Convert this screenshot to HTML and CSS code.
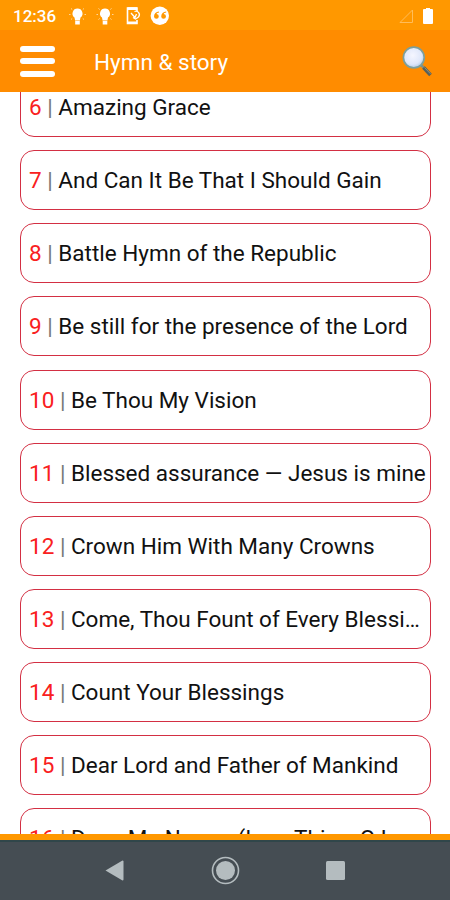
FILE: index.html
```html
<!DOCTYPE html>
<html lang="en">
<head>
    <meta charset="UTF-8">
    <meta name="viewport" content="width=device-width, initial-scale=1.0">
    <title>Hymn &amp; story</title>
    <link rel="stylesheet" href="styles.css">
</head>
<body>
    <div class="status-bar">
        <span class="time">12:36</span>
        <svg class="status-icons" width="108" height="30" viewBox="0 0 108 30" fill="#fff">
            <g id="bulb">
                <path d="M9.500 8.500a5 5 0 0 0-3 9l.7 3.500h4.600l.7-3.500A5 5 0 0 0 9.500 8.500zM7.200 20.500h4.600v4H7.200z"/>
                <path d="M1 14.500h1.500M16.500 14.500h1.500M3 8.500l1.200 1M16 8.500l-1.200 1M3 19.500l1.200-1M16 19.500l-1.200-1" stroke="#fff" stroke-opacity=".6"/>
            </g>
            <use href="#bulb" x="27.500"/>
            <g fill="none" stroke="#fff" stroke-width="1.600">
                <path d="M69 11V8h-9.500v15.500H69V20"/>
                <path d="M59.500 8.600H69M59.500 22.800H69" stroke-width="2.600"/>
                <path d="M66.500 11.500a3.500 3.500 0 0 1 4 5.500M63 13l4 4.500 1.500-3.500M70.500 17l-3 2-2.500-1.500" stroke-width="1.300"/>
            </g>
            <circle cx="91.800" cy="15.700" r="9.200"/>
            <path d="M91 11.500c-3 .2-5 2-5 5a2.400 2.400 0 1 0 2.600-2.500c.3-.8 1.100-1.300 2.400-1.400zM98.200 11.500c-3 .2-5 2-5 5a2.400 2.400 0 1 0 2.600-2.500c.3-.8 1.100-1.300 2.400-1.400z" fill="#ff9800"/>
        </svg>
        <svg class="status-right" width="40" height="30" viewBox="0 0 40 30">
            <path d="M0 22.500L12.500 10v12.500z" fill="none" stroke="#ffbd5a"/>
            <path d="M24 9h2V8h4v1h2q1 0 1 1v13q0 1-1 1h-8q-1 0-1-1V10q0-1 1-1z" fill="#fff"/>
        </svg>
    </div>

    <header>
        <button class="menu-btn" aria-label="Menu">
            <span></span>
            <span></span>
            <span></span>
        </button>
        <h1>Hymn &amp; story</h1>
        <svg class="search-icon" width="32" height="32" viewBox="0 0 32 32">
            <defs>
                <radialGradient id="glass" cx=".45" cy=".4" r=".65">
                    <stop offset="0" stop-color="#f5f6ff"/>
                    <stop offset=".65" stop-color="#dfe7fa"/>
                    <stop offset="1" stop-color="#a8c4e4"/>
                </radialGradient>
            </defs>
            <path d="M19.500 19.500l4 4" stroke="#829085" stroke-width="2.500"/>
            <path d="M22.500 22.500l7 7.500" stroke="#57605a" stroke-width="3.600"/>
            <path d="M23.500 22.500l6 6.300" stroke="#899086" stroke-width="1"/>
            <circle cx="12.800" cy="12.500" r="10.400" fill="url(#glass)" stroke="#7d9f9b" stroke-width="1.700"/>
        </svg>
    </header>

    <main>
        <ul class="hymn-list">
            <li><span class="number">6</span> <span class="bar">|</span> Amazing Grace</li>
            <li><span class="number">7</span> <span class="bar">|</span> And Can It Be That I Should Gain</li>
            <li><span class="number">8</span> <span class="bar">|</span> Battle Hymn of the Republic</li>
            <li><span class="number">9</span> <span class="bar">|</span> Be still for the presence of the Lord</li>
            <li><span class="number">10</span> <span class="bar">|</span> Be Thou My Vision</li>
            <li><span class="number">11</span> <span class="bar">|</span> Blessed assurance — Jesus is mine</li>
            <li><span class="number">12</span> <span class="bar">|</span> Crown Him With Many Crowns</li>
            <li><span class="number">13</span> <span class="bar">|</span> Come, Thou Fount of Every Blessing</li>
            <li><span class="number">14</span> <span class="bar">|</span> Count Your Blessings</li>
            <li><span class="number">15</span> <span class="bar">|</span> Dear Lord and Father of Mankind</li>
            <li><span class="number">16</span> <span class="bar">|</span> Draw Me Nearer (I am Thine, O Lord)</li>
        </ul>
    </main>

    <nav class="nav-bar">
        <svg width="450" height="60" viewBox="0 0 450 60" fill="#b4bcbf">
            <path d="M105.500 30.500L122.500 20.500q1 0 1 1v18q0 1-1 1z"/>
            <circle cx="225.500" cy="30.500" r="13" fill="none" stroke="#b4bcbf" stroke-width="1.600"/>
            <circle cx="225.500" cy="30.500" r="9.500"/>
            <rect x="326" y="21" width="19" height="19" rx="1.500"/>
        </svg>
    </nav>
</body>
</html>
```
FILE: styles.css
```css
* {
    box-sizing: border-box;
}
body {
    margin: 0;
    height: 900px;
    display: flex;
    flex-direction: column;
    overflow: hidden;
    font-family: Roboto, "Liberation Sans", sans-serif;
    background-color: #fff;
}
.status-bar {
    display: flex;
    align-items: center;
    height: 30px;
    flex: none;
    padding: 0 10px 0 13px;
    background-color: #ff9800;
    color: #fff;
}
.time {
    width: 55px;
    padding-top: 2px;
    font-size: 17px;
    font-weight: 500;
}
.status-right {
    margin-left: auto;
    overflow: visible;
}
header {
    display: flex;
    align-items: center;
    height: 62px;
    flex: none;
    padding: 0 17px 0 20px;
    background-color: #ff8c00;
    color: #fff;
}
.menu-btn {
    display: flex;
    flex-direction: column;
    gap: 6.5px;
    width: 35px;
    margin-right: 39px;
    padding: 0;
    border: none;
    background: none;
}
.menu-btn span {
    height: 6px;
    border-radius: 3px;
    background-color: #fff;
}
h1 {
    margin: 0;
    padding-top: 1px;
    font-size: 22.5px;
    font-weight: 400;
}
.search-icon {
    margin-left: auto;
}
main {
    flex: 1;
    min-height: 0;
    overflow: hidden;
    border-bottom: 6px solid #ff9800;
}
.hymn-list {
    display: flex;
    flex-direction: column;
    gap: 13.15px;
    margin: -15px 0 0;
    padding: 0 19px 0 20px;
    list-style-type: none;
}
.hymn-list li {
    flex: none;
    height: 60px;
    padding: 0 4px 0 8px;
    border: 1.5px solid #d32f43;
    border-radius: 14px;
    font-size: 22.5px;
    line-height: 59px;
    color: #111;
    white-space: nowrap;
    overflow: hidden;
    text-overflow: ellipsis;
}
.number {
    color: #f92020;
}
.bar {
    color: #777;
}
.nav-bar {
    height: 60px;
    flex: none;
    border-top: 2px solid #30464a;
    background-color: #454d53;
}
.nav-bar svg {
    display: block;
    margin-top: -2px;
}
```
